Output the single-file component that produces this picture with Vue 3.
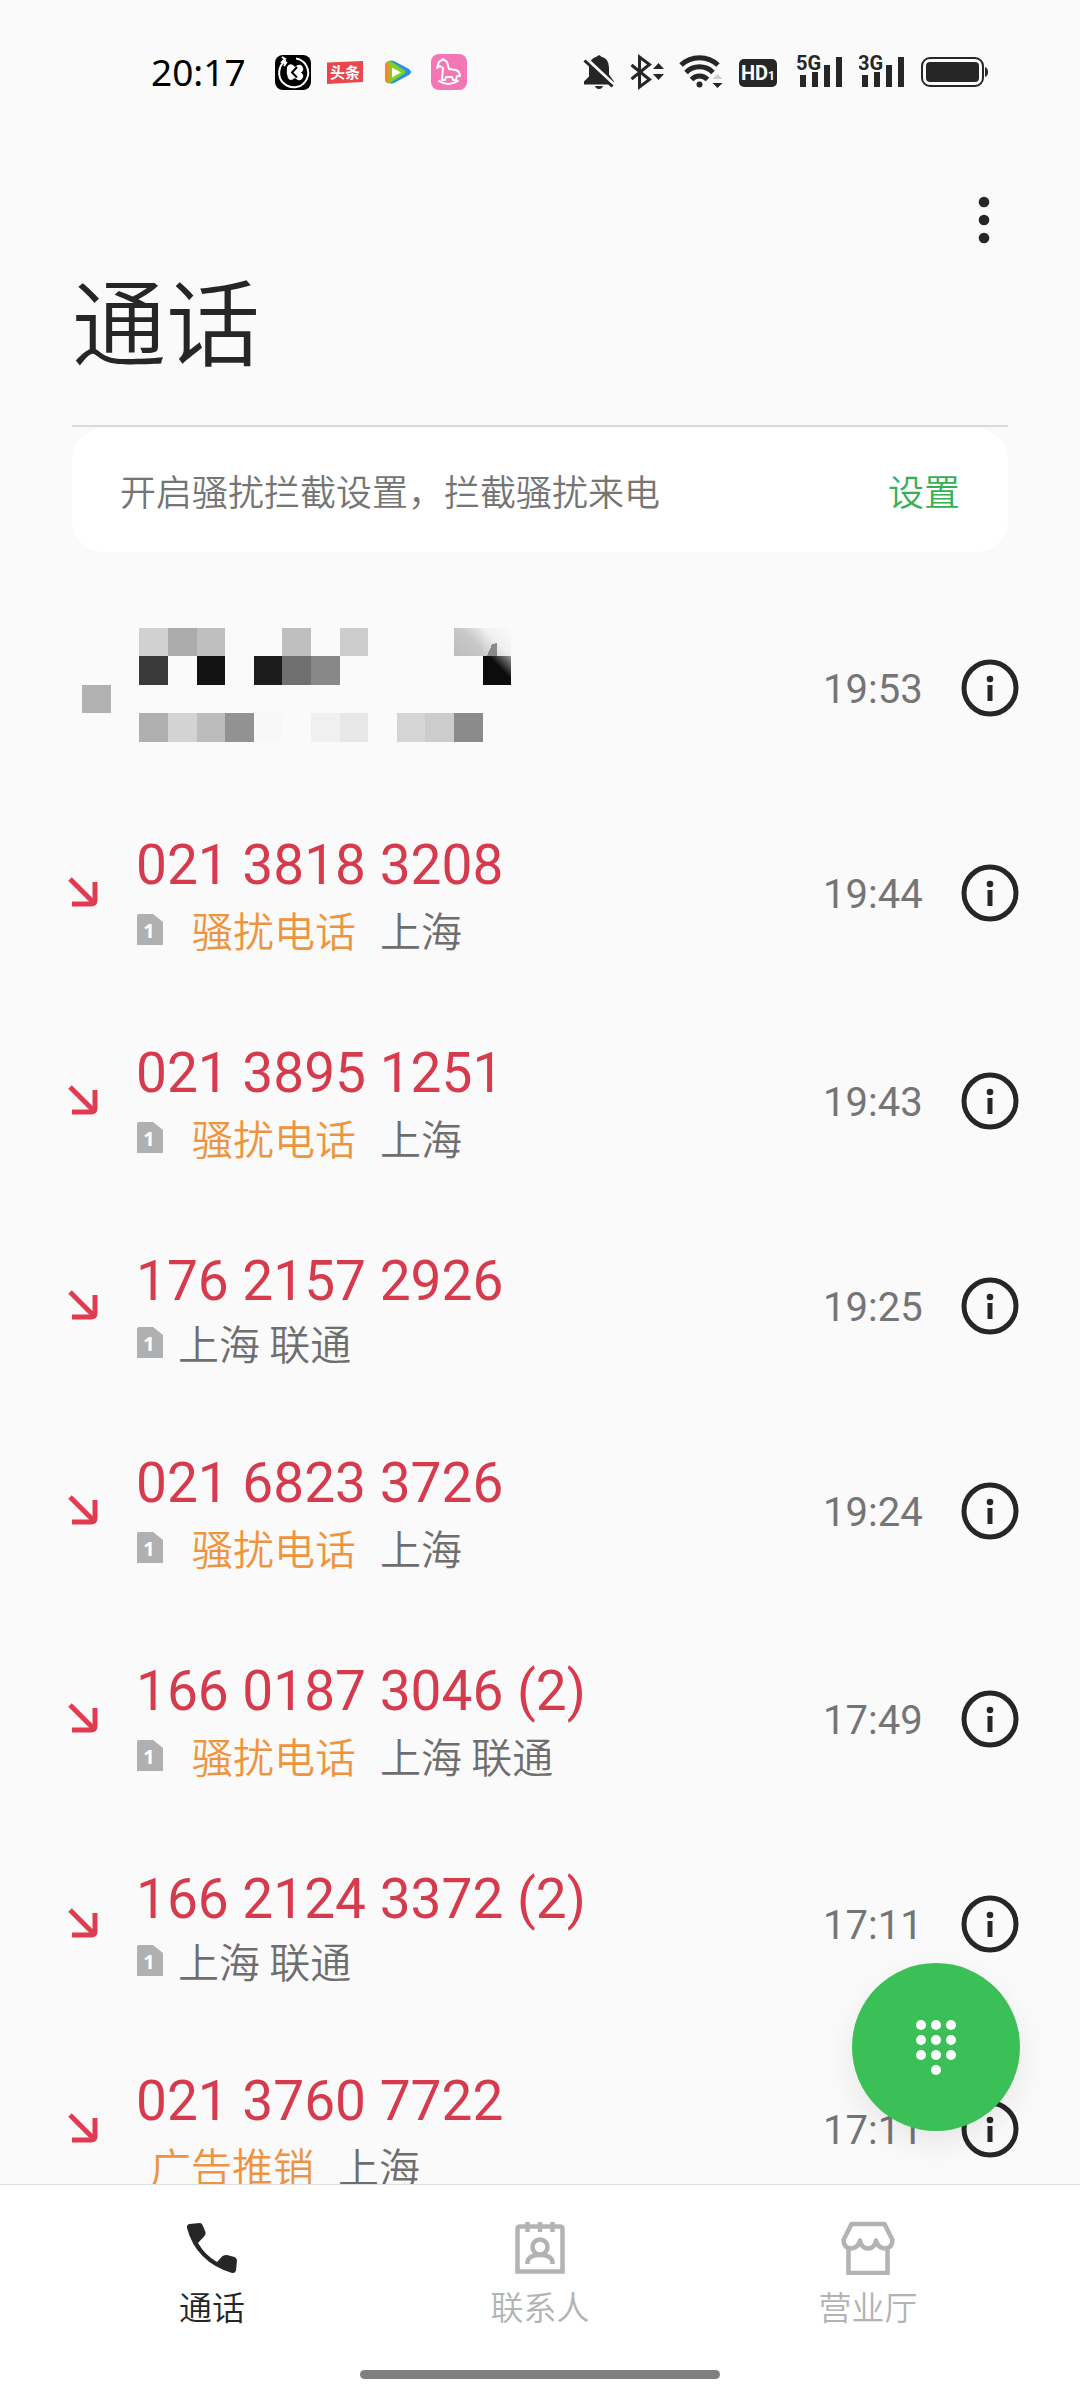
<script setup>
const calls = [
  { number: '021 3818 3208', sim: '1', tag: '骚扰电话', place: '上海', time: '19:44' },
  { number: '021 3895 1251', sim: '1', tag: '骚扰电话', place: '上海', time: '19:43' },
  { number: '176 2157 2926', sim: '1', tag: '', place: '上海 联通', time: '19:25' },
  { number: '021 6823 3726', sim: '1', tag: '骚扰电话', place: '上海', time: '19:24' },
  { number: '166 0187 3046 (2)', sim: '1', tag: '骚扰电话', place: '上海 联通', time: '17:49' },
  { number: '166 2124 3372 (2)', sim: '1', tag: '', place: '上海 联通', time: '17:11' },
  { number: '021 3760 7722', sim: '', tag: '广告推销', place: '上海', time: '17:11' },
]

// Masked contact: column, row and shade of each tile
const X = [139, 168, 197, 225, 254, 282, 311, 340, 368, 397, 425, 454, 483, 511]
const Y = { a: 628, b: 656, c: 713 }
const tiles = [
  [0, 'a', '#d1d1d1'], [1, 'a', '#ababab'], [2, 'a', '#bfbfbf'], [5, 'a', '#bfbfbf'], [7, 'a', '#cccccc'],
  [0, 'b', '#3a3a3a'], [2, 'b', '#131313'], [4, 'b', '#1c1c1c'], [5, 'b', '#707070'], [6, 'b', '#888888'],
  [0, 'c', '#b0b0b0'], [1, 'c', '#d3d3d3'], [2, 'c', '#bcbcbc'], [3, 'c', '#929292'], [4, 'c', '#f8f8f8'],
  [6, 'c', '#f0f0f0'], [7, 'c', '#e7e7e7'], [9, 'c', '#d5d5d5'], [10, 'c', '#cccccc'], [11, 'c', '#8b8b8b'],
]

const networks = ['5G', '3G']
const dots = [[0, 0], [15, 0], [30, 0], [0, 15], [15, 15], [30, 15], [0, 30], [15, 30], [30, 30], [15, 45]]
</script>

<template>
  <div class="phone">
    <header class="status">
      <div class="status-group left">
        <time class="clock">20:17</time>
        <svg width="36" height="40" viewBox="275 52 36 40" aria-hidden="true">
          <rect x="275" y="55" width="36" height="35" rx="8" fill="#000" />
          <path d="M286 60.500A14.500 14.500 0 1 0 296 58.500" fill="none" stroke="#fff" stroke-width="2" />
          <path d="M282 57l3 2-3 3 4 1-2 3" fill="none" stroke="#fff" stroke-width="2" />
          <path d="M287 67q2-4 6-2l2 2q4-4 7-1 3 4-1 6.500 4 3 1 6.500-3 3-7-1-5 4-7 0-2-5-1-11z" fill="#fff" />
          <path d="M297 67l-5 5.500 5 5" fill="none" stroke="#000" stroke-width="2" />
        </svg>
        <svg width="36" height="40" viewBox="327 52 36 40" aria-hidden="true">
          <path d="M327 62.500l36-1.500v21l-36 2z" fill="#e8474d" />
          <text x="345" y="78" text-anchor="middle" class="toutiao">头条</text>
        </svg>
        <svg width="36" height="40" viewBox="379 52 36 40" aria-hidden="true">
          <path d="M389 61q2-1 5 0l15 8q4 3 0 6l-15 8q-3 1-5 0z" fill="#2f8fe0" />
          <path d="M387 61q3 0 5 1l12 8q3 2 0 4l-14 9q-3 1-4-1z" fill="#7ed321" />
          <path d="M385 64q1-3 4-1v19q-3 1-4-1z" fill="#f08a2c" />
          <path d="M392 67.500l9 5-9 5z" fill="#fff" />
        </svg>
        <svg width="36" height="40" viewBox="431 52 36 40" aria-hidden="true">
          <rect x="431" y="54" width="36" height="36" rx="8" fill="#f277b4" />
          <path d="M437 68l2-6 4-3 4 3 2 7 7 1q4 2 4 6l-3 0-1 4h-3l-1-3h-6l-1 3h-3l1-12-3-2zM439 81q9 6 19 0" fill="none" stroke="#fff" stroke-width="2" stroke-linejoin="round" stroke-linecap="round" />
        </svg>
      </div>
      <div class="status-group right">
        <svg width="32" height="40" viewBox="582 52 32 40" aria-hidden="true">
          <path d="M596 56.500q2-2.500 4 0 8 2 8 11v7l5 7v3h-30v-3l5-5v-9q0-9 8-11zM594 86h8q-1 3-4 3t-4-3z" fill="#262626" />
          <path d="M583 57l31 29" stroke="#fafafa" stroke-width="4" />
          <path d="M583.500 60.500l28 26" stroke="#262626" stroke-width="3" />
        </svg>
        <svg width="36" height="40" viewBox="628 52 36 40" aria-hidden="true">
          <path d="M630.500 65l18 14.500-10 7.500v-30l10 7.500-18 14.500" fill="none" stroke="#262626" stroke-width="3" />
          <path d="M652 69l5.500-6 5.500 6zM652 74l5.500 6 5.500-6z" fill="#262626" />
        </svg>
        <svg width="46" height="40" viewBox="678 52 46 40" aria-hidden="true">
          <g fill="none" stroke="#262626" stroke-width="5">
            <path d="M680 65A27 27 0 0 1 717 65" />
            <path d="M685 72.500A19 19 0 0 1 712 72.500" />
            <path d="M690.500 79.500A11 11 0 0 1 706.500 79.500" />
          </g>
          <circle cx="698.500" cy="84.500" r="3" fill="#262626" />
          <path d="M711.500 79l5-5 5 5z" fill="#cfcfcf" />
          <path d="M711.500 83l5 5 5-5z" fill="#262626" />
        </svg>
        <svg width="44" height="40" viewBox="738 52 44 40" aria-hidden="true">
          <rect x="738" y="59" width="38" height="28" rx="5" fill="#262626" />
          <text x="740" y="80" class="hd">HD</text>
          <text x="767" y="80" class="hd-index">1</text>
        </svg>
        <svg v-for="n in networks" :key="n" width="48" height="40" viewBox="796 52 48 40" aria-hidden="true">
          <path d="M799 75h6v12h-6zM811 72h6v15h-6zM823 65h6v22h-6zM835 57h6v30h-6z" fill="#262626" />
          <text x="795" y="70" class="net">{{ n }}</text>
        </svg>
        <svg width="67" height="40" viewBox="921 52 67 40" aria-hidden="true">
          <rect x="922" y="58" width="61" height="28" rx="8" fill="none" stroke="#262626" stroke-width="2" />
          <rect x="926" y="62" width="53" height="20" rx="4" fill="#262626" />
          <path d="M985 67q3 1 3 5t-3 5z" fill="#262626" />
        </svg>
      </div>
    </header>

    <div class="toolbar">
      <button class="icon-button" type="button" aria-label="更多">
        <svg width="48" height="48" viewBox="0 0 48 48">
          <g fill="#262626"><circle cx="24" cy="6" r="5.300" /><circle cx="24" cy="24" r="5.300" /><circle cx="24" cy="42" r="5.300" /></g>
        </svg>
      </button>
    </div>
    <h1 class="title">通话</h1>

    <section class="notice">
      <p>开启骚扰拦截设置，拦截骚扰来电</p>
      <a href="#settings">设置</a>
    </section>

    <main class="content">
      <ul class="calls">
        <li class="call">
          <svg class="masked" width="466" height="202" viewBox="68 587 466 202" shape-rendering="crispEdges" aria-hidden="true">
            <defs>
              <linearGradient id="fade" x1="0" y1="1" x2="1" y2="0">
                <stop offset="0" stop-color="#c4c4c4" /><stop offset="0.500" stop-color="#f0f0f0" /><stop offset="1" stop-color="#fafafa" />
              </linearGradient>
              <linearGradient id="corner" x1="0" y1="1" x2="1" y2="0">
                <stop offset="0.600" stop-color="#0c0c0c" /><stop offset="1" stop-color="#9a9a9a" />
              </linearGradient>
              <linearGradient id="soft" x1="0" y1="1" x2="1" y2="0">
                <stop offset="0" stop-color="#bdbdbd" /><stop offset="0.600" stop-color="#c8c8c8" /><stop offset="1" stop-color="#ececec" />
              </linearGradient>
            </defs>
            <rect x="82" y="685" width="29" height="28" fill="#b1b1b1" />
            <rect v-for="([c, r, fill], i) in tiles" :key="i" :x="X[c]" :y="Y[r]" :width="X[c + 1] - X[c]" :height="r === 'a' ? 28 : 29" :fill="fill" />
            <rect x="454" y="628" width="29" height="28" fill="url(#soft)" />
            <rect x="483" y="628" width="28" height="28" fill="url(#fade)" />
            <path d="M487 656l5-12 5-1v13z" fill="#8a8a8a" />
            <rect x="483" y="656" width="28" height="29" fill="url(#corner)" />
          </svg>
          <time class="when">19:53</time>
          <button class="icon-button" type="button" aria-label="详情">
            <svg width="58" height="58" viewBox="0 0 58 58">
              <circle cx="29" cy="29" r="26" fill="none" stroke="#262626" stroke-width="5" />
              <circle cx="29" cy="20" r="3.300" fill="#262626" /><path d="M29 26v16" stroke="#262626" stroke-width="5" />
            </svg>
          </button>
        </li>
        <li v-for="call in calls" :key="call.number" class="call">
          <svg class="arrow" width="32" height="32" viewBox="1 1 32 32" aria-hidden="true">
            <path d="M3 3l23 23" stroke="#e03b50" stroke-width="5" />
            <path d="M5 28h19q4 0 4-4V6" fill="none" stroke="#e03b50" stroke-width="5" />
          </svg>
          <div class="body">
            <p class="number">{{ call.number }}</p>
            <p class="meta" :class="{ tagged: call.tag }">
              <svg v-if="call.sim" width="30" height="32" viewBox="2 -1 30 32">
                <path d="M3 2q0-2 2-2h14l10 8v22q0 2-2 2H3z" fill="#b0b0b0" />
                <text x="15" y="24" text-anchor="middle" class="sim">{{ call.sim }}</text>
              </svg>
              <span v-if="call.tag" class="tag">{{ call.tag }}</span>
              <span>{{ call.place }}</span>
            </p>
          </div>
          <time class="when">{{ call.time }}</time>
          <button class="icon-button" type="button" aria-label="详情">
            <svg width="58" height="58" viewBox="0 0 58 58">
              <circle cx="29" cy="29" r="26" fill="none" stroke="#262626" stroke-width="5" />
              <circle cx="29" cy="20" r="3.300" fill="#262626" /><path d="M29 26v16" stroke="#262626" stroke-width="5" />
            </svg>
          </button>
        </li>
      </ul>
      <button class="dial" type="button" aria-label="拨号盘">
        <svg width="44" height="58" viewBox="-7 -7 44 58">
          <circle v-for="([x, y], i) in dots" :key="i" :cx="x" :cy="y" r="5" fill="#fff" />
        </svg>
      </button>
    </main>

    <footer class="bottom">
      <nav class="tabs">
        <a href="#calls" class="tab active" aria-current="page">
          <svg width="54" height="54" viewBox="185 2220 54 54" aria-hidden="true">
            <path d="M189.500 2223L200 2222q1.500 0 2.500 2l3 7q.500 2-1 4l-6.500 7q7 12 19 19l5-5.500q2-2 5-1.500l7.500 2q2.500 1 2.500 3.500l-1 10q-1 3-4 2.500Q196 2261 187 2227q-.500-3.500 2.500-4z" fill="#262626" />
          </svg>
          <span>通话</span>
        </a>
        <a href="#contacts" class="tab">
          <svg width="54" height="54" viewBox="513 2220 54 54" aria-hidden="true">
            <g fill="none" stroke="#b3b3b3" stroke-width="4.500">
              <path d="M517.500 2270.500V2228q0-2.500 2.500-2.500h40q2.500 0 2.500 2.500v42.500z" />
              <path d="M527.500 2221v10M540 2221v10M552.500 2221v10" />
              <circle cx="540" cy="2246" r="7.500" />
              <path d="M527.500 2263v-2q1-7 12.500-7t12.500 7v2" />
            </g>
          </svg>
          <span>联系人</span>
        </a>
        <a href="#store" class="tab">
          <svg width="54" height="54" viewBox="841 2220 54 54" aria-hidden="true">
            <g fill="none" stroke="#b3b3b3" stroke-width="4.500" stroke-linejoin="round">
              <path d="M851.500 2223h33l8 16q0 8-8 8.500-7-1-8.500-8-1.500 8-8 8t-8-8q-1.500 7-8.500 8-8-.500-8-8.500z" />
              <path d="M848.500 2247v25h39v-25" stroke-linejoin="miter" />
            </g>
          </svg>
          <span>营业厅</span>
        </a>
      </nav>
      <div class="home-bar"></div>
    </footer>
  </div>
</template>

<style>
body {
  background: #fafafa;
}
</style>

<style scoped>
.phone {
  display: flex;
  flex-direction: column;
  height: 100vh;
  overflow: hidden;
  background: #fafafa;
  color: #262626;
  font-family: Roboto, "Noto Sans CJK SC", sans-serif;
}

p,
h1,
ul {
  margin: 0;
  padding: 0;
}

a {
  color: inherit;
  text-decoration: none;
}

svg {
  display: block;
  flex: none;
}

.icon-button {
  display: block;
  padding: 0;
  border: 0;
  background: none;
}

.status {
  flex: none;
  display: flex;
  justify-content: space-between;
  align-items: center;
  height: 144px;
  padding: 0 92px 0 151px;
}

.status-group {
  display: flex;
  align-items: center;
}

.left {
  gap: 16px;
}

.right {
  gap: 14px;
}

.clock {
  width: 108px;
  color: #000;
  font: 400 37px/40px "Noto Sans", sans-serif;
}

.toutiao {
  fill: #fff;
  font: 700 15px "Noto Sans CJK SC", sans-serif;
}

.hd {
  fill: #fff;
  font: 700 20px Roboto, sans-serif;
}

.hd-index {
  fill: #fff;
  font: 700 12px Roboto, sans-serif;
}

.net {
  fill: #262626;
  font: 700 20px Roboto, sans-serif;
}

.toolbar {
  flex: none;
  display: flex;
  justify-content: flex-end;
  align-items: center;
  height: 96px;
  margin-top: 28px;
  padding: 0 72px;
}

.title {
  flex: none;
  margin: 0 72px;
  padding: 4px 0 43px;
  border-bottom: 2px solid #d9d9d9;
  font-size: 94px;
  font-weight: 350;
  line-height: 110px;
}

.notice {
  flex: none;
  display: flex;
  justify-content: space-between;
  align-items: center;
  height: 124px;
  margin: 1px 72px 35px;
  padding: 0 48px;
  border-radius: 32px;
  background: #fff;
  color: #757575;
  font-size: 36px;
  font-weight: 350;
}

.notice a {
  color: #35b055;
}

.content {
  position: relative;
  flex: 1;
  min-height: 0;
}

.calls {
  height: 100%;
  overflow-y: auto;
  scrollbar-width: none;
  list-style: none;
}

.call {
  display: flex;
  align-items: center;
  padding: 0 61px 0 68px;
}

.masked {
  margin-right: auto;
}

.arrow {
  margin-right: 36px;
}

.body {
  flex: 1;
  padding: 44px 0 40px;
}

.number {
  color: #d63b4d;
  font-size: 55px;
  line-height: 64px;
}

.meta {
  display: flex;
  align-items: center;
  gap: 12px;
  height: 50px;
  margin-top: 4px;
  color: #6e6e6e;
  font-family: "Noto Sans CJK SC", sans-serif;
  font-size: 41px;
  font-weight: 350;
  line-height: 50px;
}

.meta.tagged {
  height: 56px;
}

.sim {
  fill: #fff;
  font: 700 20px "Noto Sans", sans-serif;
}

.tag {
  margin: 0 12px 0 14px;
  color: #ee9440;
}

.when {
  width: 138px;
  padding-top: 4px;
  color: #757575;
  font-size: 40px;
  line-height: 48px;
}

.dial {
  position: absolute;
  right: 60px;
  bottom: 53px;
  display: flex;
  justify-content: center;
  align-items: center;
  width: 168px;
  height: 168px;
  padding: 0;
  border: 0;
  border-radius: 50%;
  background: #3bc057;
  box-shadow: 0 12px 32px rgba(0, 0, 0, 0.08);
}

.bottom {
  flex: none;
  padding: 36px 48px 21px;
  border-top: 1px solid #dedede;
  background: #fff;
}

.tabs {
  display: flex;
}

.tab {
  flex: 1;
  display: flex;
  flex-direction: column;
  align-items: center;
  gap: 12px;
  color: #b3b3b3;
  font-size: 33px;
  font-weight: 350;
  line-height: 44px;
}

.tab.active {
  color: #262626;
}

.home-bar {
  width: 360px;
  height: 9px;
  margin: 39px auto 0;
  border-radius: 5px;
  background: #808080;
}
</style>
